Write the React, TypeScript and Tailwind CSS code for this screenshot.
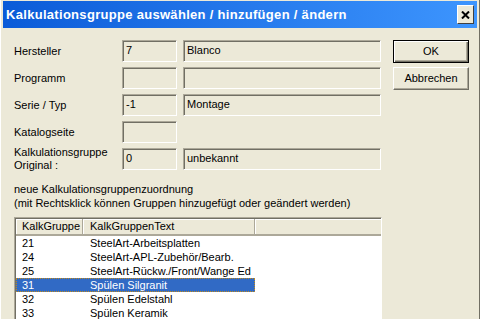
const fields = [
  { label: "Hersteller", a: "7", b: "Blanco" },
  { label: "Programm", a: "", b: "" },
  { label: "Serie / Typ", a: "-1", b: "Montage" },
  { label: "Katalogseite", a: "", b: null },
];

const rows = [
  { id: "21", text: "SteelArt-Arbeitsplatten" },
  { id: "24", text: "SteelArt-APL-Zubehör/Bearb." },
  { id: "25", text: "SteelArt-Rückw./Front/Wange Ed" },
  { id: "31", text: "Spülen Silgranit", selected: true },
  { id: "32", text: "Spülen Edelstahl" },
  { id: "33", text: "Spülen Keramik" },
];

function Field({ value, wide }: { value: string; wide?: boolean }) {
  return (
    <div
      className={`h-[22px] ${wide ? "w-[198px]" : "w-[55px]"} border border-t-[#aca899] border-l-[#aca899] border-b-white border-r-white shadow-[inset_1px_1px_0_#716f64] pl-[3px] pt-[2px] leading-[14px] text-black`}
    >
      {value}
    </div>
  );
}

function Button({ children, isDefault }: { children: string; isDefault?: boolean }) {
  return (
    <div
      className={`h-[23px] w-[76px] flex items-center justify-center bg-[#ece9d8] ${
        isDefault
          ? "border border-black shadow-[inset_1px_1px_0_#fff,inset_-1px_-1px_0_#716f64,inset_-2px_-2px_0_#aca899]"
          : "border border-t-white border-l-white border-b-[#716f64] border-r-[#716f64] shadow-[inset_-1px_-1px_0_#aca899]"
      }`}
    >
      {children}
    </div>
  );
}

export default function App() {
  return (
    <div className="w-[480px] h-[319px] overflow-hidden bg-[#ece9d8] text-[11px] text-black font-['Liberation_Sans',Arial,sans-serif] border-l border-r border-l-white border-r-[#716f64]">
      {/* title bar */}
      <div className="mx-[2px] mt-[1px] h-[27px] bg-gradient-to-r from-[#0a5bd8] to-[#3d95fe] flex items-center pl-[3px] pr-[3px]">
        <span className="flex-1 text-white font-bold text-[13px] tracking-[0.3px]">
          Kalkulationsgruppe auswählen / hinzufügen / ändern
        </span>
        <div className="w-[17px] h-[19px] bg-[#ece9d8] border border-t-white border-l-white border-b-[#404040] border-r-[#404040] flex items-center justify-center">
          <svg width="9" height="8" viewBox="0 0 9 8">
            <path d="M1 0.5 L8 7.5 M8 0.5 L1 7.5" stroke="black" strokeWidth="2" />
          </svg>
        </div>
      </div>

      <div className="flex pt-[12px] pl-[13px]">
        {/* left column */}
        <div className="w-[368px]">
          <div className="flex flex-col gap-[5px]">
            {fields.map((f) => (
              <div key={f.label} className="flex items-center h-[22px]">
                <div className="w-[108px]">{f.label}</div>
                <Field value={f.a} />
                {f.b !== null && (
                  <div className="ml-[6px]">
                    <Field value={f.b} wide />
                  </div>
                )}
              </div>
            ))}
            <div className="flex items-center h-[22px]">
              <div className="w-[108px] leading-[13px]">
                Kalkulationsgruppe
                <br />
                Original :
              </div>
              <Field value="0" />
              <div className="ml-[6px]">
                <Field value="unbekannt" wide />
              </div>
            </div>
          </div>

          <div className="mt-[12px] leading-[14px]">
            neue Kalkulationsgruppenzuordnung
            <br />
            (mit Rechtsklick können Gruppen hinzugefügt oder geändert werden)
          </div>

          {/* list */}
          <div className="mt-[7px] h-[120px] border border-t-[#aca899] border-l-[#aca899] border-b-white border-r-white shadow-[inset_1px_1px_0_#716f64] pt-[1px] pl-[1px] bg-white">
            <div className="flex h-[17px] bg-[#ece9d8] leading-[15px]">
              <div className="w-[67px] pl-[6px] border-r border-b-2 border-r-[#aca899] border-b-[#aca899] shadow-[inset_1px_1px_0_#fff]">
                KalkGruppe
              </div>
              <div className="w-[172px] pl-[7px] border-r border-b-2 border-r-[#aca899] border-b-[#aca899] shadow-[inset_1px_1px_0_#fff]">
                KalkGruppenText
              </div>
              <div className="flex-1 border-b-2 border-b-[#aca899] shadow-[inset_1px_1px_0_#fff]" />
            </div>
            {rows.map((r) => (
              <div
                key={r.id}
                className={`flex w-[239px] h-[14px] leading-[14px] ${
                  r.selected ? "bg-[#316ac5] text-white outline outline-1 outline-dotted outline-[#c08a1e] -outline-offset-1" : ""
                }`}
              >
                <div className="w-[67px] pl-[6px]">{r.id}</div>
                <div className="w-[172px] pl-[7px] whitespace-nowrap overflow-hidden">{r.text}</div>
              </div>
            ))}
          </div>
        </div>

        {/* right column */}
        <div className="ml-[11px] flex flex-col gap-[4px]">
          <Button isDefault>OK</Button>
          <Button>Abbrechen</Button>
        </div>
      </div>
    </div>
  );
}
